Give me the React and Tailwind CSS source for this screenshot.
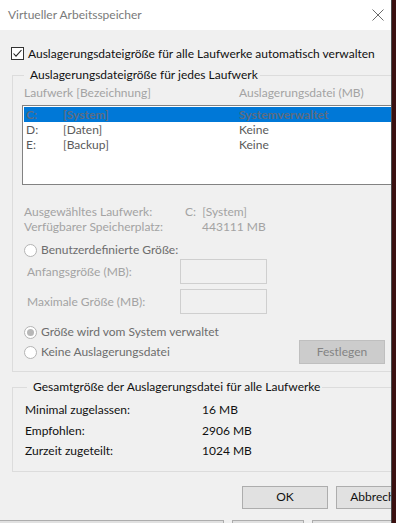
import React from "react";

function Radio({ checked }) {
  return (
    <span className="w-[13px] h-[13px] rounded-full border border-[#b4b4b4] bg-white flex items-center justify-center shrink-0">
      {checked && <span className="w-[7px] h-[7px] rounded-full bg-[#b8b8b8]" />}
    </span>
  );
}

export default function App() {
  return (
    <div className="w-[396px] h-[523px] flex bg-[#3a1010] overflow-hidden font-['Lato',sans-serif] text-[12px] leading-[16px]">
      <div className="w-[392px] h-[523px] bg-[#f0f0f0] border-r border-[#4a4a4a] overflow-hidden flex flex-col shrink-0">
        {/* Title bar */}
        <div className="h-[30px] bg-white flex items-center justify-between pl-[8px] pr-[7px] shrink-0">
          <span className="text-[#7a7a7a]">Virtueller Arbeitsspeicher</span>
          <svg width="12" height="12" viewBox="0 0 12 12">
            <path d="M0.5 0.5 L11.5 11.5 M11.5 0.5 L0.5 11.5" stroke="#6a6a6a" strokeWidth="1" fill="none" />
          </svg>
        </div>

        <div className="pl-[11px] flex flex-col">
          {/* checkbox */}
          <div className="mt-[17px] h-[13px] flex items-center">
            <span className="w-[13px] h-[13px] border border-[#333333] bg-white flex items-center justify-center shrink-0">
              <svg width="11" height="11" viewBox="0 0 11 11">
                <path d="M1.5 5.5 L4 8.2 L9.5 2" stroke="#222" strokeWidth="1.1" fill="none" />
              </svg>
            </span>
            <span className="ml-[4px] text-[#111] whitespace-nowrap">Auslagerungsdateigröße für alle Laufwerke automatisch verwalten</span>
          </div>

          {/* Group 1 */}
          <fieldset className="mt-[7px] ml-[1px] w-[400px] border border-[#dcdcdc] pl-[9px] pb-[7px]">
            <legend className="ml-[2px] pl-[6px] pr-[2px] text-[#111] h-[16px]">Auslagerungsdateigröße für jedes Laufwerk</legend>
            <div className="mt-[2px] h-[16px] flex pl-[2px] text-[#a3a3a3] whitespace-nowrap">
              <span className="w-[215px]">Laufwerk [Bezeichnung]</span>
              <span>Auslagerungsdatei (MB)</span>
            </div>
            <div className="mt-[4px] w-[380px] h-[80px] border border-[#828282] bg-white p-[1px]">
              <div className="h-[15px] bg-[#0078d7] flex items-center pl-[2px] text-[#5d6c80] font-bold whitespace-nowrap">
                <span className="w-[37px] shrink-0">C:</span>
                <span className="w-[176px] shrink-0">[System]</span>
                <span>Systemverwaltet</span>
              </div>
              <div className="h-[15px] flex items-center pl-[2px] text-[#5a5a5a] whitespace-nowrap">
                <span className="w-[37px] shrink-0">D:</span>
                <span className="w-[176px] shrink-0">[Daten]</span>
                <span>Keine</span>
              </div>
              <div className="h-[15px] flex items-center pl-[2px] text-[#5a5a5a] whitespace-nowrap">
                <span className="w-[37px] shrink-0">E:</span>
                <span className="w-[176px] shrink-0">[Backup]</span>
                <span>Keine</span>
              </div>
            </div>

            <div className="mt-[19px] h-[15px] flex items-center pl-[2px] text-[#a3a3a3] whitespace-nowrap">
              <span className="w-[161px] shrink-0">Ausgewähltes Laufwerk:</span>
              <span>C:&nbsp;&nbsp;[System]</span>
            </div>
            <div className="h-[15px] flex items-center pl-[2px] text-[#a3a3a3] whitespace-nowrap">
              <span className="w-[178px] shrink-0">Verfügbarer Speicherplatz:</span>
              <span>443111 MB</span>
            </div>

            <div className="mt-[8px] h-[16px] flex items-center pl-[2px] whitespace-nowrap">
              <Radio />
              <span className="ml-[4px] text-[#6d6d6d]">Benutzerdefinierte Größe:</span>
            </div>
            <div className="mt-[1px] h-[25px] flex items-center pl-[5px] whitespace-nowrap">
              <span className="w-[153px] shrink-0 text-[#a3a3a3]">Anfangsgröße (MB):</span>
              <span className="w-[87px] h-[25px] border border-[#cfcfcf] bg-[#f0f0f0]" />
            </div>
            <div className="mt-[5px] h-[25px] flex items-center pl-[5px] whitespace-nowrap">
              <span className="w-[153px] shrink-0 text-[#a3a3a3]">Maximale Größe (MB):</span>
              <span className="w-[87px] h-[25px] border border-[#cfcfcf] bg-[#f0f0f0]" />
            </div>

            <div className="mt-[10px] h-[16px] flex items-center pl-[2px] whitespace-nowrap">
              <Radio checked />
              <span className="ml-[4px] text-[#6d6d6d]">Größe wird vom System verwaltet</span>
            </div>
            <div className="h-[24px] flex items-center whitespace-nowrap">
              <div className="w-[277px] shrink-0 flex items-center pl-[2px]">
                <Radio />
                <span className="ml-[4px] text-[#6d6d6d]">Keine Auslagerungsdatei</span>
              </div>
              <span className="w-[86px] h-[24px] shrink-0 bg-[#cccccc] border border-[#bfbfbf] flex items-center justify-center text-[#838383]">Festlegen</span>
            </div>
          </fieldset>

          {/* Group 2 */}
          <fieldset className="mt-[7px] ml-[1px] w-[400px] border border-[#dcdcdc] pl-[12px] pb-[9px]">
            <legend className="ml-[2px] pl-[6px] pr-[2px] text-[#111] h-[16px]">Gesamtgröße der Auslagerungsdatei für alle Laufwerke</legend>
            <div className="mt-[5px] h-[20.5px] flex items-center text-[#111] whitespace-nowrap">
              <span className="w-[177px] shrink-0">Minimal zugelassen:</span>
              <span>16 MB</span>
            </div>
            <div className="h-[20.5px] flex items-center text-[#111] whitespace-nowrap">
              <span className="w-[177px] shrink-0">Empfohlen:</span>
              <span>2906 MB</span>
            </div>
            <div className="h-[20.5px] flex items-center text-[#111] whitespace-nowrap">
              <span className="w-[177px] shrink-0">Zurzeit zugeteilt:</span>
              <span>1024 MB</span>
            </div>
          </fieldset>

          {/* Buttons */}
          <div className="mt-[14px] h-[23px] flex pl-[231px] gap-[8px] whitespace-nowrap">
            <span className="w-[86px] h-[23px] shrink-0 bg-[#e1e1e1] border border-[#adadad] flex items-center justify-center text-[#111]">OK</span>
            <span className="w-[86px] h-[23px] shrink-0 bg-[#e1e1e1] border border-[#adadad] flex items-center justify-center text-[#111]">Abbrechen</span>
          </div>
        </div>

        {/* bottom strip */}
        <div className="mt-[11px] h-[4px] flex shrink-0">
          <span className="w-[225px] h-[4px] bg-[#e1e1e1] border-t border-r border-[#adadad]" />
          <span className="w-[8px]" />
          <span className="w-[72px] h-[4px] bg-[#e1e1e1] border-t border-x border-[#adadad]" />
          <span className="w-[8px]" />
          <span className="w-[79px] h-[4px] bg-[#e1e1e1] border-t border-l border-[#adadad]" />
        </div>
      </div>
    </div>
  );
}
